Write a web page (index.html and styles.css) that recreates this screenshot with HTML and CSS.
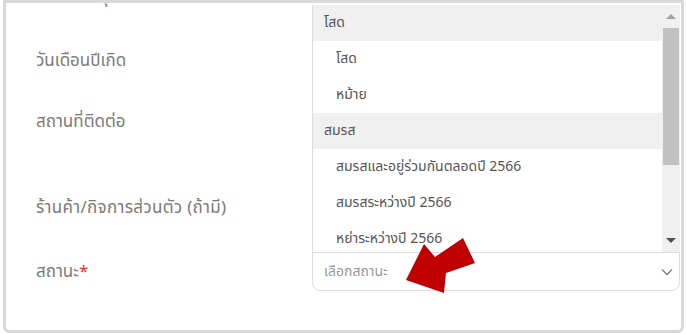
FILE: index.html
```html
<!DOCTYPE html>
<html lang="th">
<head>
<meta charset="utf-8">
<link rel="stylesheet" href="styles.css">
</head>
<body>
<div class="frame">
  <div class="form">
    <div class="row row-a"><div class="label">ชื่อ-นามสกุล</div><div class="field"></div></div>
    <div class="row row-b"><div class="label">วันเดือนปีเกิด</div><div class="field"></div></div>
    <div class="row row-c"><div class="label">สถานที่ติดต่อ</div><div class="field"></div></div>
    <div class="row row-d"><div class="label">ร้านค้า/กิจการส่วนตัว (ถ้ามี)</div><div class="field"></div></div>
    <div class="row row-e">
      <div class="label">สถานะ<span class="req">*</span></div>
      <div class="field">
        <div class="select">
          <span class="placeholder">เลือกสถานะ</span>
          <svg class="chev" width="12" height="8" viewBox="0 0 12 8"><path d="M1 1.5 L6 6.5 L11 1.5" fill="none" stroke="#777" stroke-width="1.3"/></svg>
        </div>
        <div class="listbox">
          <div class="options">
            <div class="group">โสด</div>
            <div class="opt">โสด</div>
            <div class="opt">หม้าย</div>
            <div class="group">สมรส</div>
            <div class="opt">สมรสและอยู่ร่วมกันตลอดปี 2566</div>
            <div class="opt">สมรสระหว่างปี 2566</div>
            <div class="opt">หย่าระหว่างปี 2566</div>
          </div>
          <div class="scrollbar">
            <div class="sb-up"></div>
            <div class="sb-thumb"></div>
            <div class="sb-track"></div>
            <div class="sb-down"></div>
          </div>
        </div>
      </div>
    </div>
  </div>
  <svg class="arrow" width="80" height="65" viewBox="395 233 80 65"><polygon points="403,280 421,244 432,257 460,238 472,263 443,273 441,293" fill="#c00000"/></svg>
</div>
</body>
</html>
```

FILE: styles.css
```css
* { box-sizing: border-box; }
html, body { margin: 0; padding: 0; background: #fff; }
body { font-family: "Noto Sans Thai", "Noto Sans", "Tahoma", sans-serif; }
.frame {
  position: relative;
  margin-left: 3px;
  width: 681px;
  height: 333px;
  border: 3px solid #d9d9d9;
  border-radius: 0 0 6px 6px;
  overflow: hidden;
}
.form {
  display: flex;
  flex-direction: column;
  margin-top: -22px;
}
.row {
  display: grid;
  grid-template-columns: 306px 368px;
  align-items: center;
}
.label {
  padding-left: 30px;
  font-size: 17px;
  line-height: 24px;
  color: #7a7a7a;
}
.req { color: #e5342a; }
.row-a { height: 32px; }
.row-b { height: 96px; }
.row-c { height: 52px; align-items: start; }
.row-c .label { padding-top: 1px; }
.row-d { height: 91px; }
.row-d .label { padding-top: 3px; letter-spacing: 0.3px; }
.row-e { height: 39px; }
.field { position: relative; height: 100%; }
.select {
  height: 39px;
  border: 1px solid #dcdcdc;
  border-radius: 0 0 8px 8px;
  display: flex;
  align-items: center;
  justify-content: space-between;
  padding: 0 6px 0 11px;
}
.placeholder { font-size: 14px; color: #999; }
.chev { margin-top: 1px; }
.listbox {
  position: absolute;
  left: 0;
  bottom: 100%;
  width: 368px;
  height: 247px;
  border-left: 1px solid #dcdcdc;
  background: #fff;
  display: flex;
  overflow: hidden;
}
.options { flex: 1; }
.group, .opt {
  height: 36px;
  line-height: 36px;
  font-size: 14px;
  white-space: nowrap;
}
.group { background: #f0f0f0; color: #555; padding-left: 11px; }
.opt { color: #555; padding-left: 23px; }
.scrollbar {
  width: 18px;
  background: #f0f0f0;
  display: flex;
  flex-direction: column;
  align-items: center;
}
.sb-up, .sb-down {
  height: 23px;
  width: 18px;
  position: relative;
}
.sb-up::after, .sb-down::after {
  content: "";
  position: absolute;
  left: 4px;
  width: 0; height: 0;
  border-left: 5px solid transparent;
  border-right: 5px solid transparent;
}
.sb-up::after { top: 9px; border-bottom: 5px solid #a3a3a3; }
.sb-down::after { top: 9px; border-top: 5px solid #505050; }
.sb-thumb { width: 16px; height: 137px; background: #c1c1c1; }
.sb-track { flex: 1; }
.arrow {
  position: absolute;
  left: 392px;
  top: 230px;
}
```
